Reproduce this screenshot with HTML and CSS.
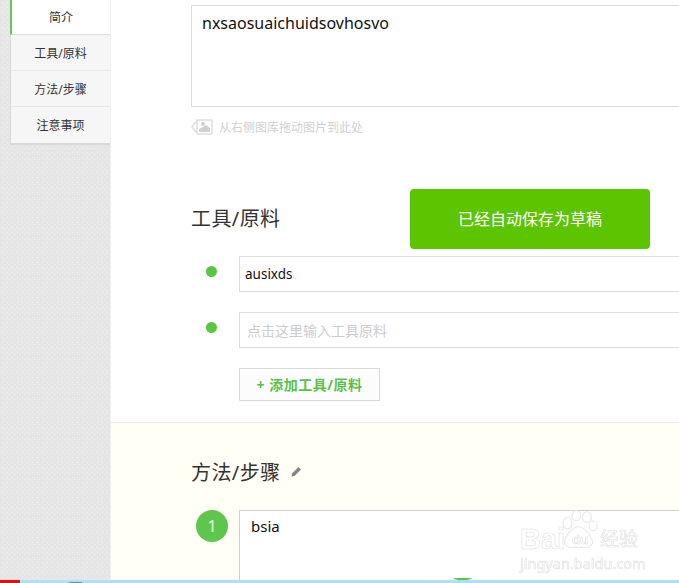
FILE: index.html
```html
<!DOCTYPE html>
<html lang="zh">
<head>
<meta charset="utf-8">
<title>编辑经验</title>
<link rel="stylesheet" href="styles.css">
</head>
<body>
<div class="page">
  <aside class="side">
    <nav class="nav">
      <a class="nav-item active">简介</a>
      <a class="nav-item">工具/原料</a>
      <a class="nav-item">方法/步骤</a>
      <a class="nav-item">注意事项</a>
    </nav>
  </aside>
  <main class="main">
    <section class="intro">
      <div class="box intro-box">nxsaosuaichuidsovhosvo</div>
      <div class="hint">
        <svg class="hint-icon" width="22" height="18" viewBox="0 0 22 18">
          <path d="M6 3 L1 9 L6 15" fill="none" stroke="#e2e2e2" stroke-width="1.5"/>
          <path d="M3.5 4 L1 9 L4 14" fill="none" stroke="#e2e2e2" stroke-width="1"/>
          <rect x="6" y="2" width="15" height="14" fill="#fff" stroke="#d6d6d6" stroke-width="1.2"/>
          <circle cx="12" cy="6" r="2" fill="#d0d0d0"/>
          <path d="M8 14 L8 11 L12 9 L15 7 L19 10 L19 14 Z" fill="#d0d0d0"/>
        </svg>
        <span>从右侧图库拖动图片到此处</span>
      </div>
    </section>
    <section class="tools">
      <h2 class="heading">工具/原料</h2>
      <div class="tool-row">
        <span class="dot"></span>
        <div class="box tool-input">ausixds</div>
      </div>
      <div class="tool-row">
        <span class="dot"></span>
        <div class="box tool-input placeholder">点击这里输入工具原料</div>
      </div>
      <button class="add-btn">+ 添加工具/原料</button>
    </section>
    <section class="steps">
      <h2 class="heading">方法/步骤
        <svg class="pencil" width="11" height="11" viewBox="0 0 11 11">
          <path d="M0.5 10.5 L1 7.5 L7.5 1 L10 3.5 L3.5 10 Z" fill="#858585"/>
        </svg>
      </h2>
      <div class="step-row">
        <span class="step-num">1</span>
        <div class="box step-box">bsia</div>
      </div>
    </section>
    <div class="step-bump"></div>
  </main>
  <div class="toast">已经自动保存为草稿</div>
  <div class="watermark">
    <svg class="paw" width="38" height="39" viewBox="0 0 42 44">
      <g fill="rgba(255,255,255,.5)" stroke="#e6e6e6" stroke-width="1.2">
        <ellipse cx="8" cy="15" rx="5" ry="6.5"/>
        <ellipse cx="18" cy="6.5" rx="5" ry="6"/>
        <ellipse cx="30" cy="8" rx="5" ry="6"/>
        <ellipse cx="37" cy="18" rx="4.5" ry="5.5"/>
        <path d="M20 19 C27 19 38 32 36 38 C34 44 26 42 20 42 C13 42 7 44 5 38 C3 32 13 19 20 19 Z"/>
      </g>
    </svg>
    <span class="wm-bai">Bai</span><span class="wm-du">du</span><span class="wm-jy">经验</span>
    <span class="wm-url">jingyan.baidu.com</span>
  </div>
  <div class="bottom-bar">
    <span class="bar-red"></span>
    <span class="bar-bump"></span>
  </div>
</div>
</body>
</html>
```

FILE: styles.css
```css
* { box-sizing: border-box; }
html, body { margin: 0; padding: 0; }
body {
  font-family: "Noto Sans", "Noto Sans CJK SC", sans-serif;
  color: #333;
  overflow: hidden;
}
.page {
  position: relative;
  display: flex;
  width: 679px;
  height: 583px;
  overflow: hidden;
}
.side {
  flex: 0 0 111px;
  padding: 0 0 0 10px;
  background:
    radial-gradient(circle, #f1f1f1 .6px, transparent 1px) 0 0 / 5px 5px,
    radial-gradient(circle, #efefef .6px, transparent 1px) 2px 2px / 5px 5px,
    #e5e5e5;
  border-right: 1px solid #eee;
}
.nav {
  display: flex;
  flex-direction: column;
  width: 100px;
  background: #f6f6f6;
  border-left: 1px solid #d9d9d9;
  border-bottom: 2px solid #d9d9d9;
}
.nav-item {
  display: flex;
  align-items: center;
  justify-content: center;
  height: 36px;
  font-size: 12px;
  color: #333;
  border-bottom: 1px solid #e8e8e8;
}
.nav-item:last-child { border-bottom: 0; }
.nav-item.active {
  height: 35px;
  margin-left: -1px;
  background: #fff;
  border-left: 2px solid #62c654;
  border-bottom: 1px solid #dcdcdc;
}
.main {
  position: relative;
  flex: 1;
  min-width: 0;
  background: #fff;
  overflow: hidden;
}
.box {
  background: #fff;
  border: 1px solid #dcdcdc;
  color: #111;
}
.intro { padding: 5px 0 0 80px; height: 188px; }
.intro-box {
  width: 600px;
  height: 102px;
  padding: 5px 10px;
  font-size: 16px;
  line-height: 24px;
}
.hint {
  display: flex;
  align-items: center;
  gap: 6px;
  margin-top: 11px;
  height: 18px;
  font-size: 12px;
  color: #d0d0d0;
}
.tools { height: 234px; padding-left: 80px; }
.heading {
  margin: 0;
  font-size: 20px;
  font-weight: 400;
  line-height: 30px;
  letter-spacing: .4px;
  color: #333;
}
.tools .heading { padding-top: 16px; height: 68px; }
.tool-row {
  display: flex;
  align-items: flex-start;
  height: 56px;
  padding-left: 15px;
}
.dot {
  flex: none;
  width: 11px;
  height: 11px;
  margin-top: 10px;
  border-radius: 50%;
  background: #58c63f;
}
.tool-input {
  flex: none;
  width: 540px;
  height: 36px;
  margin-left: 22px;
  padding: 0 5px;
  font-size: 13.5px;
  line-height: 34px;
}
.tool-input.placeholder {
  padding: 1px 7px 0;
  color: #ccc;
  font-size: 14px;
}
.add-btn {
  display: block;
  width: 141px;
  height: 33px;
  margin-left: 48px;
  background: #fcfcfc;
  border: 1px solid #d9d9d9;
  color: #5cc04a;
  font-family: inherit;
  font-size: 14px;
  font-weight: 700;
  letter-spacing: .5px;
  padding: 0 0 2px;
}
.steps {
  height: 161px;
  padding: 35px 0 0 80px;
  background: #fffff6;
  border-top: 1px solid #f0ede6;
}
.pencil { margin-left: 5px; vertical-align: 3px; }
.step-row { display: flex; margin-top: 22px; padding-left: 5px; }
.step-num {
  flex: 0 0 32px;
  height: 32px;
  border-radius: 50%;
  background: #5cc74c;
  color: #e8ffe4;
  font-size: 16px;
  line-height: 32px;
  text-align: center;
}
.step-box {
  flex: none;
  width: 540px;
  height: 80px;
  margin-left: 11px;
  padding: 3px 11px;
  border-color: #d0d0d0;
  font-size: 15px;
  line-height: 24px;
}
.step-bump {
  position: absolute;
  left: 342px;
  bottom: 3px;
  width: 19px;
  height: 2px;
  border-radius: 0 0 50% 50% / 0 0 100% 100%;
  background: #58c63f;
}
.toast {
  position: absolute;
  left: 410px;
  top: 189px;
  width: 240px;
  height: 60px;
  border-radius: 4px;
  background: #5cc400;
  color: #fff;
  font-size: 16px;
  line-height: 60px;
  text-align: center;
}
.watermark {
  position: absolute;
  left: 519px;
  top: 510px;
  width: 125px;
  height: 68px;
  color: transparent;
  -webkit-text-stroke: 0.6px #e0e0e0;
  filter: blur(.4px);
}
.paw { position: absolute; left: 41px; top: 0; }
.wm-bai {
  position: absolute;
  left: 1px;
  top: 11px;
  font: 700 29px/36px "Liberation Sans", sans-serif;
}
.wm-du {
  position: absolute;
  left: 53px;
  top: 21px;
  font: 700 13px/18px "Liberation Sans", sans-serif;
}
.wm-jy {
  position: absolute;
  left: 81px;
  top: 15px;
  font: 400 19px/26px "Noto Sans CJK SC", sans-serif;
}
.wm-url {
  position: absolute;
  left: 1px;
  top: 44px;
  font: 400 14.5px/18px "Noto Sans", sans-serif;
  white-space: nowrap;
}
.bottom-bar {
  position: absolute;
  left: 0;
  right: 0;
  bottom: 0;
  height: 3px;
  background: #ade0f7;
}
.bar-red {
  position: absolute;
  left: 0;
  top: 0;
  width: 20px;
  height: 3px;
  background: #f20a0a;
}
.bar-bump {
  position: absolute;
  left: 69px;
  top: 2px;
  width: 13px;
  height: 1px;
  background: #5a9d8a;
}
```
